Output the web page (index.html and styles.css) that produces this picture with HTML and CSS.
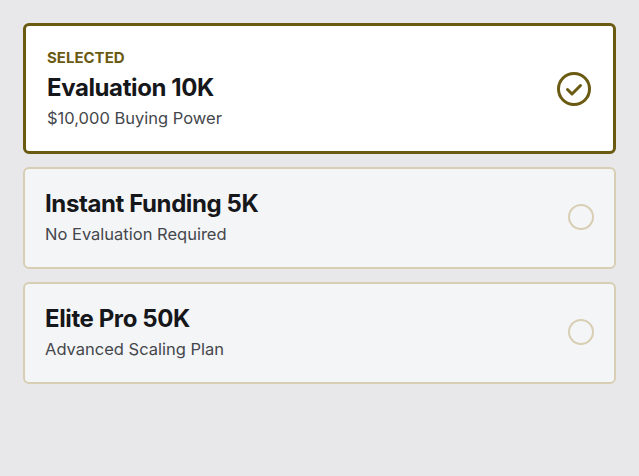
FILE: index.html
```html
<!DOCTYPE html>
<html lang="en">
<head>
    <meta charset="UTF-8">
    <meta name="viewport" content="width=device-width, initial-scale=1.0">
    <title>Choose Plan</title>
    <link rel="stylesheet" href="styles.css">
</head>
<body>
    <div class="plans">
        <div class="card selected">
            <div class="info">
                <div class="tag">Selected</div>
                <div class="name">Evaluation 10K</div>
                <div class="desc">$10,000 Buying Power</div>
            </div>
            <svg class="check" width="34" height="34" viewBox="0 0 34 34">
                <circle cx="17" cy="17" r="15.5" fill="none" stroke="#6b5a12" stroke-width="3"/>
                <path d="M10.5 17.5 L15 22 L23.5 13.5" fill="none" stroke="#6b5a12" stroke-width="3" stroke-linecap="round" stroke-linejoin="round"/>
            </svg>
        </div>

        <div class="card">
            <div class="info">
                <div class="name">Instant Funding 5K</div>
                <div class="desc">No Evaluation Required</div>
            </div>
            <span class="radio"></span>
        </div>

        <div class="card">
            <div class="info">
                <div class="name">Elite Pro 50K</div>
                <div class="desc">Advanced Scaling Plan</div>
            </div>
            <span class="radio"></span>
        </div>
    </div>
</body>
</html>
```

FILE: styles.css
```css
body {
    font-family: Inter, "Noto Sans", sans-serif;
    margin: 0;
    padding: 23px;
    background: #e8e8ea;
}
.plans {
    display: flex;
    flex-direction: column;
    gap: 13px;
}
.card {
    display: flex;
    align-items: center;
    justify-content: space-between;
    background: #f4f5f7;
    border: 2px solid #d8ceb4;
    border-radius: 6px;
    padding: 20px 20px 22px 20px;
}
.card.selected {
    background: #fff;
    border: 3px solid #6b5a12;
    padding: 22px 22px 22px 21px;
}
.tag {
    font-size: 15px;
    line-height: 20px;
    font-weight: 700;
    color: #6b5a12;
    text-transform: uppercase;
    margin-bottom: 5px;
}
.name {
    font-size: 24px;
    line-height: 30px;
    font-weight: 700;
    letter-spacing: -0.4px;
    color: #16171a;
    margin-bottom: 4px;
}
.desc {
    font-size: 16.5px;
    line-height: 22px;
    color: #45474c;
}
.check {
    display: block;
}
.radio {
    width: 22px;
    height: 22px;
    border: 2px solid #d8ceb4;
    border-radius: 50%;
}
```
